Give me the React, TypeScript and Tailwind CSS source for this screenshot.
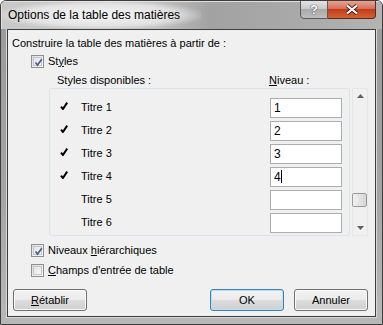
import React from 'react';

const rows = [
  { name: 'Titre 1', level: '1', checked: true },
  { name: 'Titre 2', level: '2', checked: true },
  { name: 'Titre 3', level: '3', checked: true },
  { name: 'Titre 4', level: '4', checked: true, caret: true },
  { name: 'Titre 5', level: '', checked: false },
  { name: 'Titre 6', level: '', checked: false },
];

function CheckBox({ checked }: { checked: boolean }) {
  return (
    <div className="w-[13px] h-[13px] border border-[#8e8f8f] bg-[linear-gradient(135deg,#dcdcdc,#fbfbfb)] p-[1px] shrink-0">
      <div className="w-full h-full border border-[#c6c6c6] bg-[linear-gradient(135deg,#e2e2e2,#f8f8f8)] relative">
        {checked && (
          <svg viewBox="0 0 9 9" className="absolute left-[0px] top-[0px] w-[9px] h-[9px]">
            <path d="M1.5 4.5 L3.5 7 L7.8 1.2" stroke="#4a5f97" strokeWidth="1.7" fill="none" />
          </svg>
        )}
      </div>
    </div>
  );
}

function Tick() {
  return (
    <svg viewBox="0 0 8 8" className="w-[8px] h-[8px] -mt-[4px]">
      <path d="M1 4.6 L2.9 7 L7.2 0.6" stroke="#000" strokeWidth="2" fill="none" />
    </svg>
  );
}

function Button({ children, primary }: { children: React.ReactNode; primary?: boolean }) {
  return (
    <div
      className={`w-[74px] h-[22px] rounded-[3px] border flex items-center justify-center text-[11px] text-black ${
        primary
          ? 'border-[#3c7fb1] shadow-[inset_0_0_0_1px_#b6e3f8]'
          : 'border-[#707070] shadow-[inset_0_0_0_1px_#fbfbfb]'
      } bg-[linear-gradient(#f2f2f2_0%,#ebebeb_50%,#dddddd_51%,#cfcfcf_100%)]`}
    >
      {children}
    </div>
  );
}

export default function App() {
  return (
    <div
      className="w-[383px] h-[325px] bg-[linear-gradient(#9a9a9a,#a4a4a4_60%,#b8b8b8)] border border-[#3d3d3d] rounded-t-[6px] flex flex-col overflow-hidden relative"
      style={{ fontFamily: '"Liberation Sans", Arial, sans-serif' }}
    >
      {/* Title bar */}
      <div className="h-[28px] shrink-0 relative flex items-center bg-[linear-gradient(90deg,#c9c9c9_0%,#c4c4c4_40%,#a2a2a2_55%,#aaaaaa_80%,#b4b4b4_100%)] shadow-[inset_1px_1px_0_#e0e0e0]">
        <div className="absolute left-0 top-0 w-[200px] h-[28px] bg-[radial-gradient(ellipse_at_center,rgba(255,255,255,0.85)_0%,rgba(255,255,255,0.5)_55%,rgba(255,255,255,0)_75%)]" />
        <span className="relative pl-[7px] text-[12px] text-black">Options de la table des matières</span>
        <div className="absolute right-[6px] top-[-1px] flex">
          <div className="w-[28px] h-[19px] rounded-bl-[4px] border border-[#5a5a5a] bg-[linear-gradient(#e4e4e4_0%,#c9c9c9_45%,#a9a9a9_50%,#bdbdbd_100%)] flex items-center justify-center">
            <span className="text-[13px] font-bold text-white leading-none [text-shadow:0_0_1px_#333,0_0_1px_#333]">?</span>
          </div>
          <div className="w-[48px] h-[19px] rounded-br-[4px] border border-l-0 border-[#5a2a22] bg-[linear-gradient(#e8a493_0%,#d5705a_45%,#c23c1f_50%,#d2642f_100%)] flex items-center justify-center">
            <svg viewBox="0 0 14 11" className="w-[14px] h-[11px]">
              <path d="M2 1.5 L12 9.5 M12 1.5 L2 9.5" stroke="#3a1a12" strokeWidth="3.6" />
              <path d="M2 1.5 L12 9.5 M12 1.5 L2 9.5" stroke="#fff" strokeWidth="2.2" />
            </svg>
          </div>
        </div>
      </div>

      {/* Body with side frames */}
      <div className="flex-1 flex px-[6px] pb-[7px]">
        <div className="flex-1 border border-[#3c3c3c] shadow-[0_0_0_1px_#d8d8d8] bg-[#f0f0f0] text-[11px] text-black flex flex-col">
          <div className="pl-[4px] pt-[6px] h-[21px] leading-[14px]">Construire la table des matières à partir de :</div>
          <div className="flex items-center gap-[4px] pl-[23px] h-[16px] mt-[2px]">
            <CheckBox checked />
            <span>St<u>y</u>les</span>
          </div>
          <div className="flex h-[19px] pt-[4px] leading-[14px]">
            <span className="pl-[49px] w-[261px]">Styles disponibles :</span>
            <span><u>N</u>iveau :</span>
          </div>

          <div className="flex pl-[41px] h-[149px]">
            <div className="w-[301px] h-[148px] border border-[#dbe3ea] rounded-[2px] bg-[#f0f0f0] flex flex-col pt-[7px]">
              {rows.map((r) => (
                <div key={r.name} className="h-[23px] flex items-center">
                  <div className="w-[31px] pl-[10px] flex items-center">{r.checked && <Tick />}</div>
                  <span className="w-[189px]">{r.name}</span>
                  <div className="w-[72px] h-[20px] border border-[#abadb3] bg-white flex items-center pl-[3px] text-[12px]">
                    {r.level}
                    {r.caret && <span className="w-[1px] h-[13px] bg-black" />}
                  </div>
                </div>
              ))}
            </div>
            <div className="ml-[2px] w-[16px] h-[148px] border border-[#e6e6e6] flex flex-col items-center justify-between py-[5px]">
              <svg viewBox="0 0 7 4" className="w-[7px] h-[4px]"><path d="M3.5 0 L7 4 L0 4 Z" fill="#606060" /></svg>
              <div className="flex-1 flex flex-col justify-end w-full pb-[19px]">
                <div className="h-[14px] w-[15px] -ml-[1px] rounded-[2px] border border-[#9a9a9a] bg-[linear-gradient(90deg,#f3f3f3,#e0e0e0_60%,#d4d4d4)]" />
              </div>
              <svg viewBox="0 0 7 4" className="w-[7px] h-[4px]"><path d="M0 0 L7 0 L3.5 4 Z" fill="#606060" /></svg>
            </div>
          </div>

          <div className="flex items-center gap-[4px] pl-[23px] h-[20px] mt-[3px]">
            <CheckBox checked />
            <span>Niveaux <u>h</u>iérarchiques</span>
          </div>
          <div className="flex items-center gap-[4px] pl-[23px] h-[21px]">
            <CheckBox checked={false} />
            <span><u>C</u>hamps d'entrée de table</span>
          </div>

          <div className="flex pl-[5px] pr-[7px] mt-[8px]">
            <Button><span><u>R</u>établir</span></Button>
            <div className="flex-1" />
            <Button primary>OK</Button>
            <div className="w-[10px]" />
            <Button>Annuler</Button>
          </div>
        </div>
      </div>
    </div>
  );
}
